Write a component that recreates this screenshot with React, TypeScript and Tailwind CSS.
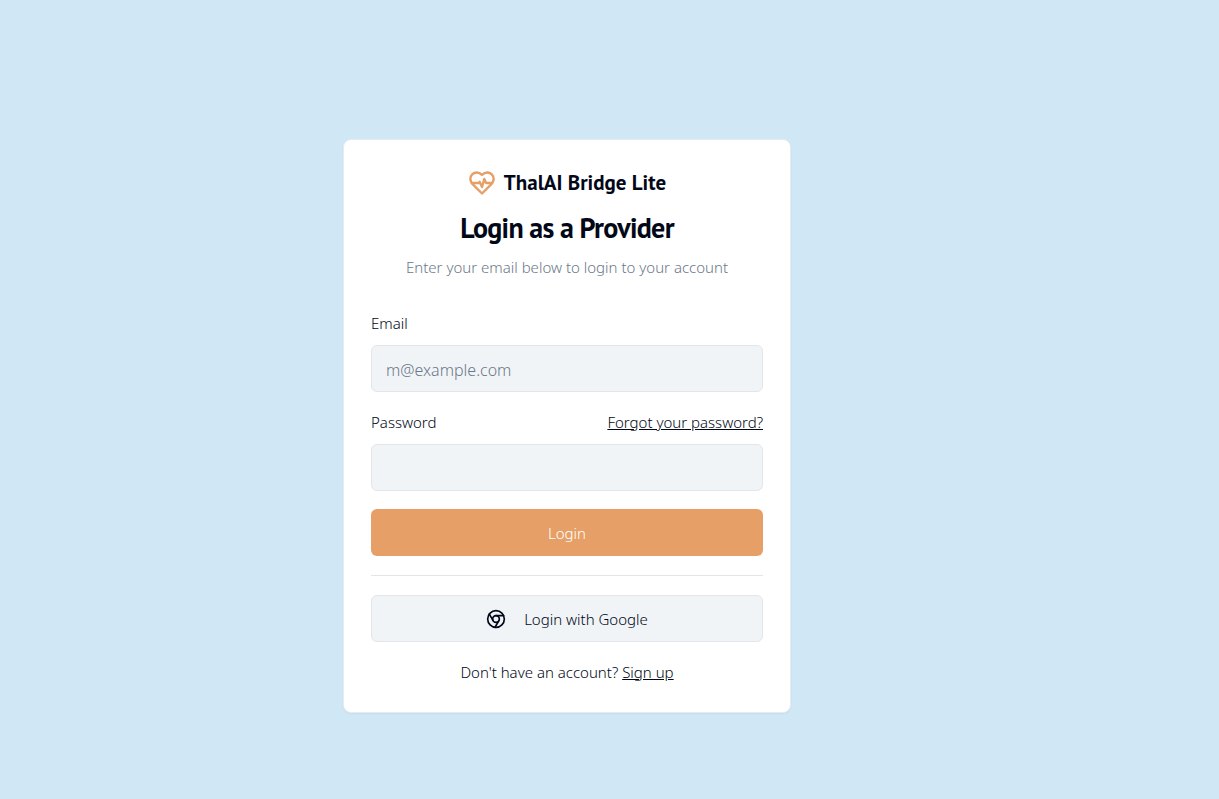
import { FormEvent, useState } from "react";

function HeartPulseIcon() {
  return (
    <svg
      viewBox="0 0 24 24"
      fill="none"
      stroke="currentColor"
      strokeWidth="2"
      strokeLinecap="round"
      strokeLinejoin="round"
      className="size-7 text-[#e69f66]"
      aria-hidden="true"
    >
      <path d="M19 14c1.49-1.46 3-3.21 3-5.5A5.5 5.5 0 0 0 16.5 3c-1.76 0-3 .5-4.5 2-1.5-1.5-2.74-2-4.5-2A5.5 5.5 0 0 0 2 8.5c0 2.3 1.5 4.05 3 5.5l7 7Z" />
      <path d="M3.22 12H9.5l.5-1 2 4.5 2-7 1.5 3.5h5.27" />
    </svg>
  );
}

function ChromeIcon() {
  return (
    <svg
      viewBox="0 0 24 24"
      fill="none"
      stroke="currentColor"
      strokeWidth="2"
      strokeLinecap="round"
      strokeLinejoin="round"
      className="size-5"
      aria-hidden="true"
    >
      <circle cx="12" cy="12" r="10" />
      <circle cx="12" cy="12" r="4" />
      <line x1="21.17" x2="12" y1="8" y2="8" />
      <line x1="3.95" x2="8.54" y1="6.06" y2="14" />
      <line x1="10.88" x2="15.46" y1="21.94" y2="14" />
    </svg>
  );
}

const inputClass =
  "h-[47px] w-full rounded-md border border-[#e2e6ea] bg-[#f0f4f7] px-3.5 pt-0.5 text-base font-light placeholder:text-[#6b7889]";

export default function App() {
  const [email, setEmail] = useState("");
  const [password, setPassword] = useState("");

  function submit(e: FormEvent) {
    e.preventDefault();
  }

  return (
    <main className="min-h-screen flex items-center justify-center bg-[#d0e8f5] pt-[53px] pr-[85px] font-['Noto_Sans',sans-serif] text-[15px] leading-6 font-light text-[#020817]">
      <div className="w-full max-w-md rounded-lg border border-[#e6ebf0] bg-white px-[27px] pt-[27px] pb-7 shadow-xs">

        {/* HEADER */}
        <div className="text-center">
          <div className="flex h-8 items-center justify-center gap-2 font-['PT_Sans','Open_Sans',sans-serif] text-[21px] font-bold">
            <HeartPulseIcon />
            <span>ThalAI Bridge Lite</span>
          </div>
          <h1 className="mt-[11px] font-['PT_Sans','Open_Sans',sans-serif] text-[28px] leading-9 font-bold tracking-tight">
            Login as a Provider
          </h1>
          <p className="mt-[9px] text-[#6b7889]">
            Enter your email below to login to your account
          </p>
        </div>

        {/* FORM */}
        <form onSubmit={submit} className="mt-8 flex flex-col gap-[18px]">
          <div className="flex flex-col gap-[9px]">
            <label htmlFor="email" className="leading-[25px]">Email</label>
            <input
              id="email"
              type="email"
              placeholder="m@example.com"
              value={email}
              onChange={(e) => setEmail(e.target.value)}
              className={inputClass}
            />
          </div>
          <div className="flex flex-col gap-[9px]">
            <div className="flex items-center justify-between leading-[25px]">
              <label htmlFor="password">Password</label>
              <a href="#" className="underline">Forgot your password?</a>
            </div>
            <input
              id="password"
              type="password"
              value={password}
              onChange={(e) => setPassword(e.target.value)}
              className={inputClass}
            />
          </div>
          <button type="submit" className="h-[47px] w-full rounded-md bg-[#e69f66] text-white">
            Login
          </button>
        </form>

        <hr className="my-[19px] border-[#e2e6ea]" />

        <button
          type="button"
          className="flex h-[47px] w-full items-center justify-center gap-[18px] rounded-md border border-[#e2e6ea] bg-[#f0f4f7]"
        >
          <ChromeIcon />
          Login with Google
        </button>

        <p className="mt-[18px] text-center">
          Don't have an account? <a href="#" className="underline">Sign up</a>
        </p>
      </div>
    </main>
  );
}
